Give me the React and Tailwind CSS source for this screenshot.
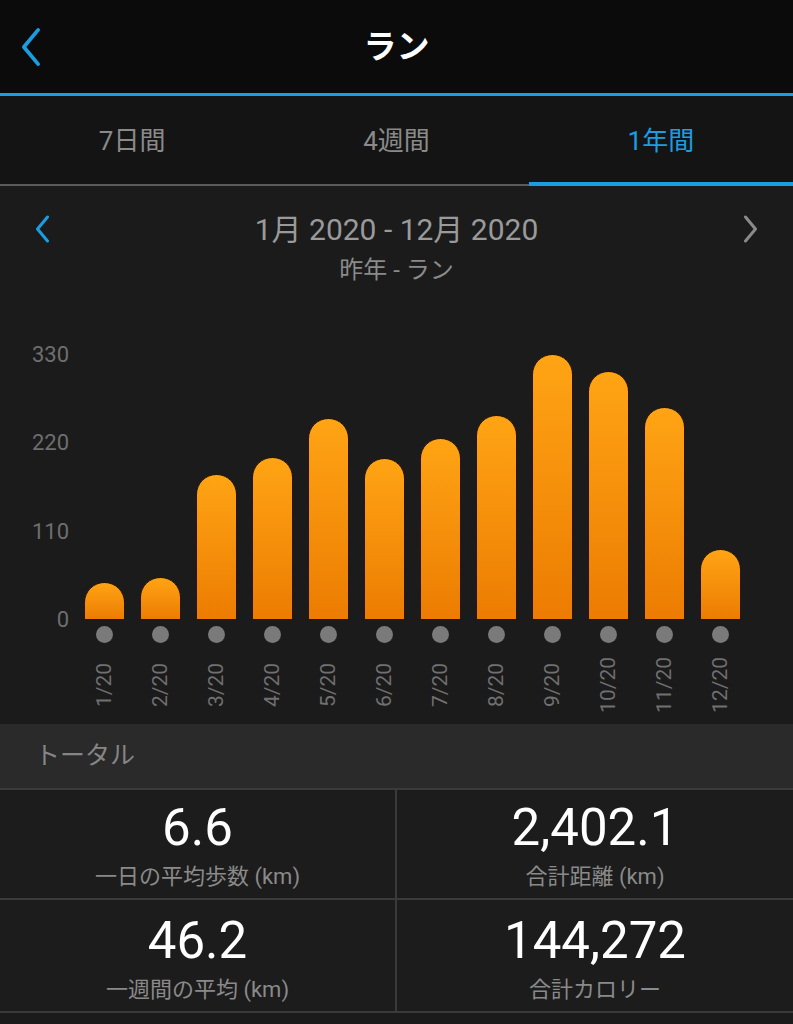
import React from 'react';

const months = [
  { label: '1/20', value: 47 },
  { label: '2/20', value: 54 },
  { label: '3/20', value: 182 },
  { label: '4/20', value: 204 },
  { label: '5/20', value: 252 },
  { label: '6/20', value: 203 },
  { label: '7/20', value: 227 },
  { label: '8/20', value: 256 },
  { label: '9/20', value: 332 },
  { label: '10/20', value: 311 },
  { label: '11/20', value: 266 },
  { label: '12/20', value: 89 },
];

const tabs = ['7日間', '4週間', '1年間'];
const activeTab = 2;

const stats = [
  { value: '6.6', label: '一日の平均歩数 (km)' },
  { value: '2,402.1', label: '合計距離 (km)' },
  { value: '46.2', label: '一週間の平均 (km)' },
  { value: '144,272', label: '合計カロリー' },
];

// 330 units on the axis = 264px
const PX_PER_UNIT = 0.8;

const Chevron = ({ dir = 'left', className = '', width = 3 }) => (
  <svg viewBox="0 0 16 28" className={className} fill="none" stroke="currentColor" strokeWidth={width} strokeLinecap="round" strokeLinejoin="round">
    {dir === 'left' ? <path d="M13 2 L3 14 L13 26" /> : <path d="M3 2 L13 14 L3 26" />}
  </svg>
);

export default function App() {
  return (
    <div className="min-h-screen bg-[#1b1b1b] font-['Roboto','Noto_Sans_CJK_JP',sans-serif]">
      {/* top bar */}
      <header className="h-[93px] bg-[#0b0b0b] flex items-center relative">
        <Chevron dir="left" width={2.6} className="w-[26px] h-[40px] ml-[18px] text-[#1b9de2]" />
        <h1 className="absolute left-0 right-0 text-center text-[33px] font-bold text-white leading-none">ラン</h1>
      </header>
      <div className="h-[3px] bg-[#1b9de2]" />

      {/* period tabs */}
      <nav className="grid grid-cols-3 h-[90px] bg-[#141414]">
        {tabs.map((t, i) => (
          <div key={t} className="flex flex-col">
            <div className={`flex-1 flex items-center justify-center text-[26px] pt-[4px] ${i === activeTab ? 'text-[#1b9de2]' : 'text-[#8a8a8a]'}`}>
              {t}
            </div>
            <div className="h-[4px] flex items-end">
              {i === activeTab
                ? <div className="h-full w-full bg-[#1b9de2]" />
                : <div className="h-[2px] w-full bg-[#5a5a5a]" />}
            </div>
          </div>
        ))}
      </nav>

      {/* chart */}
      <section className="h-[538px] bg-[#1b1b1b] flex flex-col">
        <div className="mt-[25px] h-[36px] flex items-center justify-between px-[34px]">
          <Chevron dir="left" className="w-[17px] h-[28px] text-[#1b9de2]" />
          <span className="text-[30px] text-[#9a9a9a]">1月 2020 - 12月 2020</span>
          <Chevron dir="right" className="w-[17px] h-[28px] text-[#8a8a8a]" />
        </div>
        <p className="mt-[9px] h-[28px] leading-[28px] text-center text-[24px] text-[#8a8a8a]">昨年 - ラン</p>

        <div className="mt-[61px] flex items-start">
          <div className="w-[76px] h-[285px] flex flex-col justify-between items-end pr-[7px] text-[22px] leading-[20px] text-[#6e6e6e]">
            <span>330</span>
            <span>220</span>
            <span>110</span>
            <span>0</span>
          </div>
          <div className="w-[672px] flex flex-col">
            <div className="h-[275px] grid grid-cols-12 items-end">
              {months.map(m => (
                <div key={m.label} className="flex justify-center">
                  <div
                    className="w-[41px] rounded-t-full border border-[#2b1600] bg-linear-to-b from-[#ffa414] to-[#ec7c02]"
                    style={{ height: Math.round(m.value * PX_PER_UNIT) }}
                  />
                </div>
              ))}
            </div>
            <div className="mt-[6px] grid grid-cols-12">
              {months.map(m => (
                <div key={m.label} className="flex justify-center">
                  <div className="w-[17px] h-[17px] rounded-full bg-[#7a7a7a]" />
                </div>
              ))}
            </div>
            <div className="mt-[14px] h-[50px] grid grid-cols-12">
              {months.map(m => (
                <div key={m.label} className="flex justify-center items-center">
                  <span className="[writing-mode:vertical-rl] rotate-180 text-[21px] leading-none text-[#707070]">{m.label}</span>
                </div>
              ))}
            </div>
          </div>
        </div>
      </section>

      {/* totals */}
      <div className="h-[64px] bg-[#2a2a2a] flex items-center pl-[35px] text-[25px] text-[#858585]">トータル</div>
      <div className="grid grid-cols-[397px_1fr] bg-[#1c1c1c] border-y-2 border-[#3a3a3a]">
        {stats.map((s, i) => (
          <div
            key={s.label}
            className={`flex flex-col items-center ${i < 2 ? 'h-[110px] pt-[12px] border-b-2' : 'h-[111px] pt-[15px]'} ${i % 2 === 0 ? 'border-r-2' : ''} border-[#3a3a3a]`}
          >
            <span className="text-[51px] leading-[52px] text-white">{s.value}</span>
            <span className="mt-[9px] text-[22px] leading-[28px] text-[#8a8a8a]">{s.label}</span>
          </div>
        ))}
      </div>
    </div>
  );
}
